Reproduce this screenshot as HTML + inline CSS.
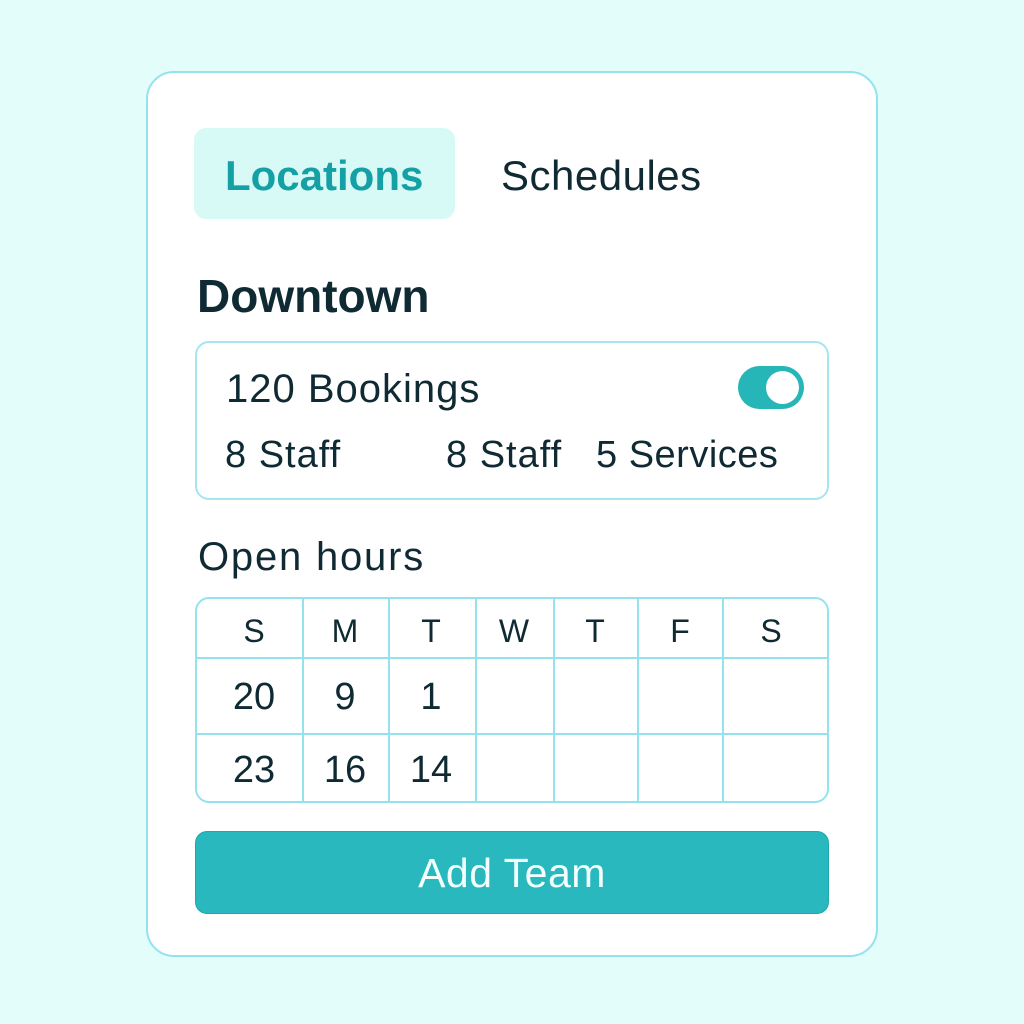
<!DOCTYPE html>
<html><head><meta charset="utf-8"><style>
*{margin:0;padding:0;box-sizing:border-box}
body{width:1024px;height:1024px;background:#e3fdfb;position:relative;font-family:"Liberation Sans",sans-serif;color:#0f2a33;overflow:hidden}
.card{position:absolute;left:146px;top:71px;width:732px;height:886px;background:#fff;border:2px solid #94e2ee;border-radius:28px}
.a{position:absolute;white-space:nowrap;line-height:1}
.tab{position:absolute;left:194px;top:128px;width:261px;height:91px;background:#d8faf6;border-radius:12px}
.box{position:absolute;left:195px;top:341px;width:634px;height:159px;border:2px solid #a4e6f0;border-radius:14px}
.tog{position:absolute;left:738px;top:366px;width:66px;height:43px;background:#27b6b8;border-radius:22px}
.tog i{position:absolute;right:5px;top:5px;width:33px;height:33px;border-radius:50%;background:#fff}
.grid{position:absolute;left:195px;top:597px;width:634px;height:206px;border:2px solid #94e2ee;border-radius:14px;overflow:hidden}
.v{position:absolute;top:0;bottom:0;width:2px;background:#94e2ee}
.h{position:absolute;left:0;right:0;height:2px;background:#94e2ee}
.c{position:absolute;text-align:center;line-height:1;font-size:38px;transform:translateX(-50%)}
.btn{position:absolute;left:195px;top:831px;width:634px;height:83px;background:#28b8bd;border:1px solid #1fa9ae;border-radius:12px;color:#f2fffe;font-size:41px;text-align:center;line-height:83px;letter-spacing:0.5px}
</style></head><body>
<div class="card"></div>
<div class="tab"></div>
<div class="a" style="left:225px;top:155px;font-size:42px;font-weight:bold;color:#14a0a4">Locations</div>
<div class="a" style="left:501px;top:155px;font-size:42px;letter-spacing:0.5px">Schedules</div>
<div class="a" style="left:197px;top:273px;font-size:46px;font-weight:bold">Downtown</div>
<div class="box"></div>
<div class="a" style="left:226px;top:369px;font-size:40px;letter-spacing:1px">120 Bookings</div>
<div class="tog"><i></i></div>
<div class="a" style="left:225px;top:436px;font-size:38px;letter-spacing:1px">8 Staff</div>
<div class="a" style="left:446px;top:436px;font-size:38px;letter-spacing:1px">8 Staff</div>
<div class="a" style="left:596px;top:436px;font-size:38px;letter-spacing:0.5px">5 Services</div>
<div class="a" style="left:198px;top:537px;font-size:40px;letter-spacing:1.8px">Open hours</div>
<div class="grid">
<div class="v" style="left:105px"></div><div class="v" style="left:191px"></div><div class="v" style="left:278px"></div><div class="v" style="left:356px"></div><div class="v" style="left:440px"></div><div class="v" style="left:525px"></div>
<div class="h" style="top:58px"></div><div class="h" style="top:134px"></div>
<div class="c" style="left:57px;top:16px;font-size:32px">S</div>
<div class="c" style="left:148px;top:16px;font-size:32px">M</div>
<div class="c" style="left:234px;top:16px;font-size:32px">T</div>
<div class="c" style="left:317px;top:16px;font-size:32px">W</div>
<div class="c" style="left:398px;top:16px;font-size:32px">T</div>
<div class="c" style="left:483px;top:16px;font-size:32px">F</div>
<div class="c" style="left:574px;top:16px;font-size:32px">S</div>
<div class="c" style="left:57px;top:79px">20</div>
<div class="c" style="left:148px;top:79px">9</div>
<div class="c" style="left:234px;top:79px">1</div>
<div class="c" style="left:57px;top:152px">23</div>
<div class="c" style="left:148px;top:152px">16</div>
<div class="c" style="left:234px;top:152px">14</div>
</div>
<div class="btn">Add Team</div>
</body></html>
